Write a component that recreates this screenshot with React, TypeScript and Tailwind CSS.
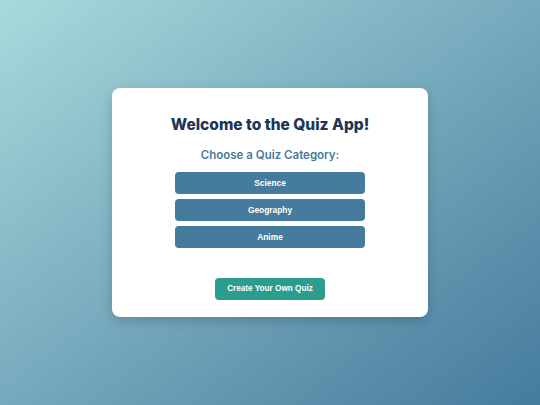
import React from "react";

const categories = ["Science", "Geography", "Anime"];

export default function App() {
  return (
    <div className="min-h-screen w-full flex items-center justify-center bg-gradient-to-br from-[#a8dadc] to-[#457b9d] font-['Inter','Noto_Sans',sans-serif]">
      <div className="w-[316px] h-[229px] bg-white rounded-[8px] shadow-[0_4px_12px_rgba(0,0,0,0.18)] flex flex-col items-center pt-[26px] pb-[17px]">
        <h1 className="text-[15.5px] leading-[22px] font-extrabold text-[#1d3557]">
          Welcome to the Quiz App!
        </h1>
        <h2 className="mt-[11px] text-[11.5px] leading-[16px] font-semibold text-[#457b9d]">
          Choose a Quiz Category:
        </h2>
        <div className="mt-[9px] flex flex-col gap-[5px]">
          {categories.map((c) => (
            <button
              key={c}
              className="w-[190px] h-[22px] rounded-[4px] bg-[#457b9d] text-white text-[8.4px] font-bold font-['Liberation_Sans',Arial,sans-serif]"
            >
              {c}
            </button>
          ))}
        </div>
        <button className="mt-[30px] w-[110px] h-[22px] rounded-[4px] bg-[#2a9d8f] text-white text-[8.2px] font-bold font-['Liberation_Sans',Arial,sans-serif]">
          Create Your Own Quiz
        </button>
      </div>
    </div>
  );
}
